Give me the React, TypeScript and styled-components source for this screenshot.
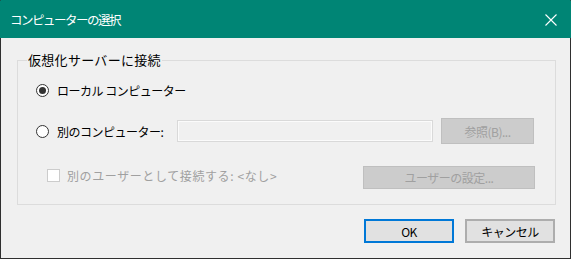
import styled, { createGlobalStyle } from 'styled-components'

const GlobalStyle = createGlobalStyle`
  html, body {
    margin: 0;
    padding: 0;
    background: #f0f0f0;
  }
  body {
    font-family: 'Noto Sans CJK JP', 'Noto Sans', sans-serif;
    font-size: 12px;
    color: #000;
  }
`

const App = () => {
  return (
    <>
      <GlobalStyle />
      <Window>
        <TitleBar>
          <Title>コンピューターの選択</Title>
          <CloseIcon width="12" height="12" viewBox="0 0 12 12">
            <path d="M0.5 0.5 L11.5 11.5 M11.5 0.5 L0.5 11.5" stroke="#fff" strokeWidth="1.1" />
          </CloseIcon>
        </TitleBar>
        <Body>
          <Group>
            <Legend>仮想化サーバーに接続</Legend>
            <Row height={20}>
              <RadioCell>
                <Radio checked />
                <Label>ローカル コンピューター</Label>
              </RadioCell>
            </Row>
            <Row height={26} top={18}>
              <RadioCell width={133}>
                <Radio />
                <Label>別のコンピューター:</Label>
              </RadioCell>
              <TextBox />
              <Button disabled width={93} height={26}>
                参照(B)...
              </Button>
            </Row>
            <Row height={24} top={22} align="flex-start">
              <CheckCell>
                <CheckBox />
                <Label disabled wide>
                  {'別のユーザーとして接続する: <なし>'}
                </Label>
              </CheckCell>
              <Button disabled width={172} height={23} push>
                ユーザーの設定...
              </Button>
            </Row>
          </Group>
          <Footer>
            <Button primary width={90} height={24}>
              OK
            </Button>
            <Button width={90} height={24}>
              キャンセル
            </Button>
          </Footer>
        </Body>
      </Window>
    </>
  )
}

const Radio = ({ checked }: { checked?: boolean }) => (
  <RadioRing>{checked && <RadioDot />}</RadioRing>
)

const Window = styled.div`
  width: 571px;
  height: 259px;
  box-sizing: border-box;
  border: 1px solid #2f2f2f;
  border-top-color: #008575;
  background: #f0f0f0;
  display: flex;
  flex-direction: column;
`

const TitleBar = styled.div`
  height: 37px;
  background: #008575;
  color: #fff;
  display: flex;
  align-items: center;
  justify-content: space-between;
  padding: 0 14px 0 10px;
  margin: 0 -1px;
  flex-shrink: 0;
`

const Title = styled.span`
  font-size: 12.5px;
  letter-spacing: -1.5px;
  line-height: 16px;
`

const CloseIcon = styled.svg`
  display: block;
`

const Body = styled.div`
  display: flex;
  flex-direction: column;
  padding: 14px 15px 0 16px;
`

const Group = styled.fieldset`
  margin: 0;
  padding: 12px 20px 14px 18px;
  border: 1px solid #dcdcdc;
  width: 539px;
  box-sizing: border-box;
  display: flex;
  flex-direction: column;
`

const Legend = styled.legend`
  font-size: 13px;
  line-height: 16px;
  padding: 0 1px;
  margin-left: -9px;
  letter-spacing: 0.3px;
`

const Row = styled.div<{ height: number; top?: number; align?: string }>`
  display: flex;
  align-items: ${(p) => p.align || 'center'};
  height: ${(p) => p.height}px;
  margin-top: ${(p) => p.top || 0}px;
  gap: 8px;
`

const RadioCell = styled.div<{ width?: number }>`
  display: flex;
  align-items: center;
  width: ${(p) => (p.width ? `${p.width}px` : 'auto')};
`

const CheckCell = styled.div`
  display: flex;
  align-items: center;
  margin-left: 11px;
  height: 18px;
`

const RadioRing = styled.span`
  width: 13px;
  height: 13px;
  box-sizing: border-box;
  border: 1px solid #333;
  border-radius: 50%;
  background: #fff;
  display: flex;
  align-items: center;
  justify-content: center;
  flex-shrink: 0;
`

const RadioDot = styled.span`
  width: 7px;
  height: 7px;
  border-radius: 50%;
  background: #333;
`

const CheckBox = styled.span`
  width: 13px;
  height: 13px;
  box-sizing: border-box;
  border: 1px solid #cccccc;
  background: #fff;
  flex-shrink: 0;
`

const Label = styled.span<{ disabled?: boolean; wide?: boolean }>`
  margin-left: ${(p) => (p.wide ? '7px' : '8px')};
  font-size: 12px;
  letter-spacing: ${(p) => (p.wide ? '0.6px' : '-0.5px')};
  white-space: pre;
  color: ${(p) => (p.disabled ? '#a0a0a0' : '#000')};
`

const TextBox = styled.div`
  width: 256px;
  height: 22px;
  box-sizing: border-box;
  border: 1px solid #d9d9d9;
  box-shadow: inset 0 0 0 1px #fbfbfb;
  background: #f0f0f0;
`

const Button = styled.div<{
  width: number
  height: number
  disabled?: boolean
  primary?: boolean
  push?: boolean
}>`
  width: ${(p) => p.width}px;
  height: ${(p) => p.height}px;
  box-sizing: border-box;
  display: flex;
  align-items: center;
  justify-content: center;
  font-size: 12px;
  letter-spacing: -0.5px;
  margin-left: ${(p) => (p.push ? 'auto' : '0')};
  background: ${(p) => (p.disabled ? '#cccccc' : '#e1e1e1')};
  color: ${(p) => (p.disabled ? '#a0a0a0' : '#000')};
  border: ${(p) =>
    p.primary
      ? '2px solid #0078d7'
      : p.disabled
        ? '1px solid #bfbfbf'
        : '2px solid #adadad'};
`

const Footer = styled.div`
  display: flex;
  justify-content: flex-end;
  gap: 11px;
  margin-top: 14px;
`

export default App
